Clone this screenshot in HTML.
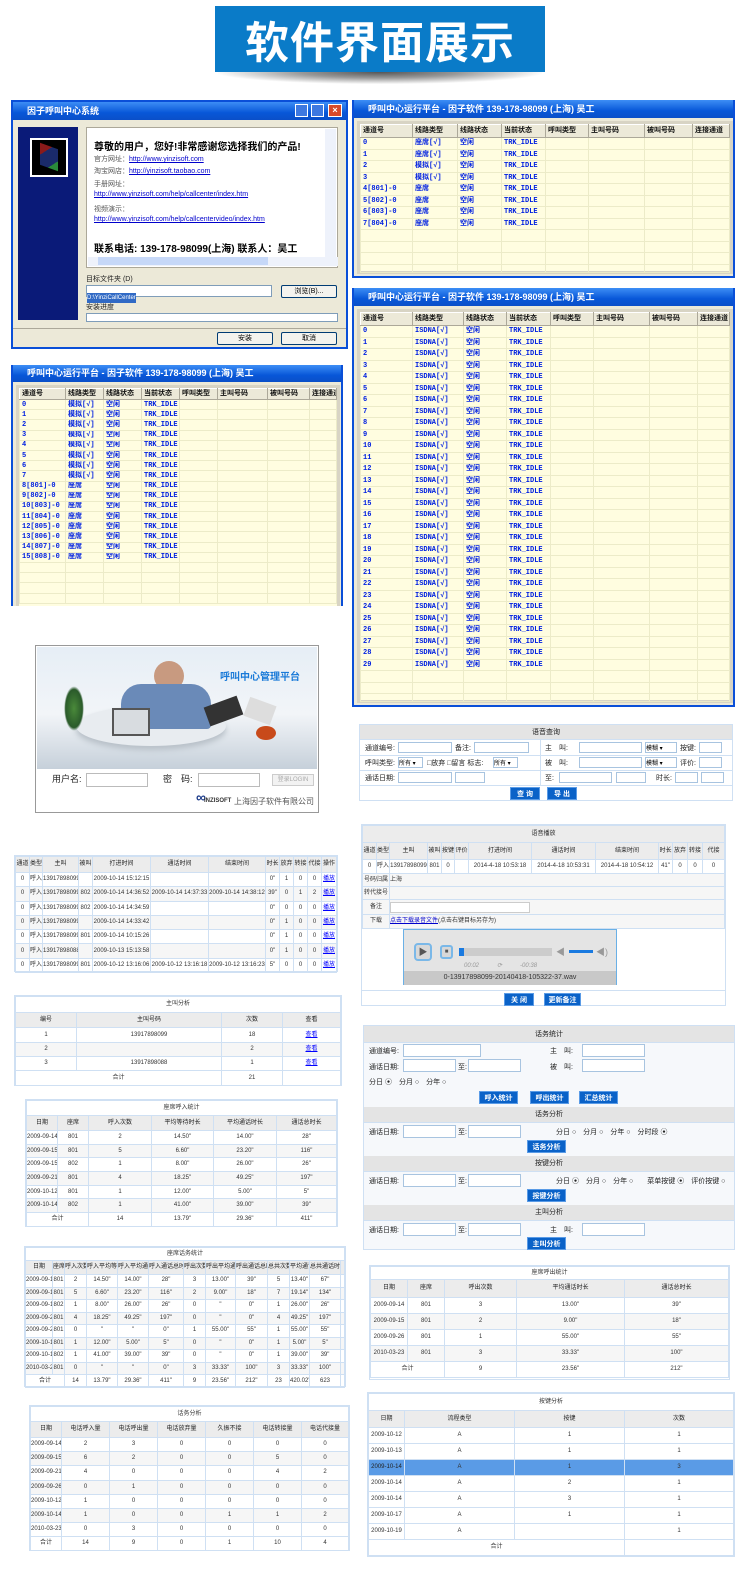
<!DOCTYPE html>
<html><head><meta charset="utf-8">
<style>
*{margin:0;padding:0;box-sizing:border-box}
body{width:750px;height:1571px;background:#fff;position:relative;overflow:hidden;font-family:"Liberation Sans","Noto Sans CJK SC",sans-serif}
.a{position:absolute}
table{border-collapse:collapse;table-layout:fixed;width:100%}
.t td{border:1px solid #cfe0f3;text-align:center;font-size:6px;line-height:7px;vertical-align:middle;color:#333;white-space:nowrap;overflow:hidden;padding:0}
.t tr.h td{background:#ececec;color:#222}
.t tr.c td{background:#fff;font-size:7px}
.box{background:#fff;border:1px solid #cfe0f3}
.win{background:#ece9d8;border:2px solid #0a4fd8}
.tb{height:18px;background:linear-gradient(#3d8ef5,#0857d8 60%,#0a4fc8);color:#fff;font-size:9px;font-weight:bold;line-height:18px;padding-left:14px;white-space:nowrap;overflow:hidden}
.g{background:#fffde0;border:3px solid #d8d4c4}
.g td{border:1px solid #ecebc8;font-size:7px;line-height:8px;vertical-align:middle;font-weight:bold;color:#0020e0;padding-left:2px;white-space:nowrap;overflow:hidden;font-family:"Liberation Mono","Noto Sans CJK SC",monospace}
.g tr.h td{background:#ece9d8;color:#111;border-color:#fff #aca899 #aca899 #fff}
.btn{position:absolute;background:#0a62c8;color:#fff;font-size:7px;font-weight:bold;text-align:center;line-height:13px;height:13px;border:1px solid #5a9be6}
.in{position:absolute;background:#fff;border:1px solid #a8c4e0;height:11px}
.lb{position:absolute;font-size:7px;color:#222;white-space:nowrap}
.sec{position:absolute;left:0;right:0;background:#e4e4e4;text-align:center;font-size:7px;color:#222;border-bottom:1px solid #cfe0f3}
</style></head><body>

<!-- Banner -->
<div class="a" style="left:218px;top:72px;width:324px;height:12px;background:radial-gradient(ellipse at 50% 0%,#555 0%,#999 35%,rgba(255,255,255,0) 72%)"></div>
<div class="a" style="left:215px;top:6px;width:330px;height:66px;background:#0a7bc8;color:#fff;font-size:44px;font-weight:bold;text-align:center;line-height:66px;font-family:'Noto Sans CJK SC',sans-serif;letter-spacing:1px">软件界面展示</div>

<!-- Installer -->
<div class="a win" style="left:11px;top:100px;width:337px;height:249px">
 <div class="tb">因子呼叫中心系统
  <span class="a" style="right:38px;top:2px;width:13px;height:13px;background:#3d78e0;border:1px solid #fff"></span>
  <span class="a" style="right:22px;top:2px;width:13px;height:13px;background:#3d78e0;border:1px solid #fff"></span>
  <span class="a" style="right:4px;top:2px;width:14px;height:13px;background:#d84a2a;border:1px solid #fff;font-size:9px;line-height:11px;text-align:center">×</span>
 </div>
 <div class="a" style="left:5px;top:25px;width:60px;height:193px;background:#0a1a78"></div>
 <div class="a" style="left:17px;top:36px;width:38px;height:39px;background:#000;border:2px solid #fff"><div style="margin:6px 8px;width:18px;height:22px;background:linear-gradient(135deg,#8a1a1a 30%,#1a2a6a 30%,#1a2a6a 75%,#2a8a3a 75%);transform:skewY(20deg)"></div></div>
 <div class="a" style="left:73px;top:25px;width:252px;height:141px;background:#fff;border:1px solid #aca899"></div>
 <div class="a" style="left:81px;top:36px;font-size:10px;font-weight:bold;white-space:nowrap">尊敬的用户，您好!非常感谢您选择我们的产品!</div>
 <div class="a lb" style="left:81px;top:52px;color:#555">官方网址：<u style="color:#00c">http://www.yinzisoft.com</u></div>
 <div class="a lb" style="left:81px;top:64px;color:#555">淘宝网店：<u style="color:#00c">http://yinzisoft.taobao.com</u></div>
 <div class="a lb" style="left:81px;top:77px;color:#555">手册网址：</div>
 <div class="a lb" style="left:81px;top:89px"><u style="color:#00c">http://www.yinzisoft.com/help/callcenter/index.htm</u></div>
 <div class="a lb" style="left:81px;top:102px;color:#555">视频演示：</div>
 <div class="a lb" style="left:81px;top:114px"><u style="color:#00c">http://www.yinzisoft.com/help/callcentervideo/index.htm</u></div>
 <div class="a" style="left:81px;top:138px;font-size:10px;font-weight:bold;white-space:nowrap">联系电话: 139-178-98099(上海) 联系人：吴工</div>
 <div class="a" style="left:312px;top:27px;width:11px;height:130px;background:#eef2fb"></div>
 <div class="a" style="left:75px;top:155px;width:250px;height:9px;background:#eef2fb"><div style="margin-left:10px;width:170px;height:8px;background:#c6d8f8"></div></div>
 <div class="lb" style="left:73px;top:172px">目标文件夹 (D)</div>
 <div class="a" style="left:73px;top:183px;width:186px;height:12px;background:#fff;border:1px solid #7f9db9"><span style="background:#316ac5;color:#fff;font-size:6px;display:inline-block;line-height:10px">D:\YinziCallCenter</span></div>
 <div class="a" style="left:268px;top:183px;width:56px;height:13px;background:#f4f3ee;border:1px solid #003c74;border-radius:2px;font-size:7px;text-align:center;line-height:11px">浏览(B)...</div>
 <div class="lb" style="left:73px;top:200px">安装进度</div>
 <div class="a" style="left:73px;top:211px;width:252px;height:9px;background:#fff;border:1px solid #7f9db9"></div>
 <div class="a" style="left:0;top:226px;width:333px;height:1px;background:#aca899"></div>
 <div class="a" style="left:204px;top:230px;width:56px;height:13px;background:#f4f3ee;border:1px solid #003c74;border-radius:2px;font-size:7px;text-align:center;line-height:11px">安装</div>
 <div class="a" style="left:268px;top:230px;width:56px;height:13px;background:#f4f3ee;border:1px solid #003c74;border-radius:2px;font-size:7px;text-align:center;line-height:11px">取消</div>
</div>

<!-- Win2 -->
<div class="a win" style="left:352px;top:100px;width:383px;height:178px;border-width:0 2px 2px 2px">
 <div class="tb">呼叫中心运行平台 - 因子软件 139-178-98099 (上海) 吴工</div>
 <div class="a g" style="left:3px;top:21px;width:376px;height:153px">
 <table><colgroup><col style="width:52px"><col style="width:45px"><col style="width:44px"><col style="width:44px"><col style="width:43px"><col style="width:56px"><col style="width:48px"><col></colgroup>
 <tr class="h" style="height:13px"><td>通道号</td><td>线路类型</td><td>线路状态</td><td>当前状态</td><td>呼叫类型</td><td>主叫号码</td><td>被叫号码</td><td>连接通道</td></tr>
 <tr style="height:11.5px"><td>0</td><td>座席[√]</td><td>空闲</td><td>TRK_IDLE</td><td></td><td></td><td></td><td></td></tr>
 <tr style="height:11.5px"><td>1</td><td>座席[√]</td><td>空闲</td><td>TRK_IDLE</td><td></td><td></td><td></td><td></td></tr>
 <tr style="height:11.5px"><td>2</td><td>模拟[√]</td><td>空闲</td><td>TRK_IDLE</td><td></td><td></td><td></td><td></td></tr>
 <tr style="height:11.5px"><td>3</td><td>模拟[√]</td><td>空闲</td><td>TRK_IDLE</td><td></td><td></td><td></td><td></td></tr>
 <tr style="height:11.5px"><td>4[801]-0</td><td>座席</td><td>空闲</td><td>TRK_IDLE</td><td></td><td></td><td></td><td></td></tr>
 <tr style="height:11.5px"><td>5[802]-0</td><td>座席</td><td>空闲</td><td>TRK_IDLE</td><td></td><td></td><td></td><td></td></tr>
 <tr style="height:11.5px"><td>6[803]-0</td><td>座席</td><td>空闲</td><td>TRK_IDLE</td><td></td><td></td><td></td><td></td></tr>
 <tr style="height:11.5px"><td>7[804]-0</td><td>座席</td><td>空闲</td><td>TRK_IDLE</td><td></td><td></td><td></td><td></td></tr>
 <tr style="height:11.5px"><td></td><td></td><td></td><td></td><td></td><td></td><td></td><td></td></tr>
 <tr style="height:11.5px"><td></td><td></td><td></td><td></td><td></td><td></td><td></td><td></td></tr>
 <tr style="height:11.5px"><td></td><td></td><td></td><td></td><td></td><td></td><td></td><td></td></tr>
 <tr style="height:8px"><td></td><td></td><td></td><td></td><td></td><td></td><td></td><td></td></tr>
 </table></div>
</div>

<!-- Win3 -->
<div class="a win" style="left:352px;top:288px;width:383px;height:419px;border-width:0 2px 2px 2px">
 <div class="tb">呼叫中心运行平台 - 因子软件 139-178-98099 (上海) 吴工</div>
 <div class="a g" style="left:3px;top:21px;width:376px;height:394px">
 <table><colgroup><col style="width:52px"><col style="width:51px"><col style="width:43px"><col style="width:44px"><col style="width:43px"><col style="width:56px"><col style="width:48px"><col></colgroup>
 <tr class="h" style="height:13px"><td>通道号</td><td>线路类型</td><td>线路状态</td><td>当前状态</td><td>呼叫类型</td><td>主叫号码</td><td>被叫号码</td><td>连接通道</td></tr>
 <tr style="height:11.5px"><td>0</td><td>ISDNA[√]</td><td>空闲</td><td>TRK_IDLE</td><td></td><td></td><td></td><td></td></tr>
 <tr style="height:11.5px"><td>1</td><td>ISDNA[√]</td><td>空闲</td><td>TRK_IDLE</td><td></td><td></td><td></td><td></td></tr>
 <tr style="height:11.5px"><td>2</td><td>ISDNA[√]</td><td>空闲</td><td>TRK_IDLE</td><td></td><td></td><td></td><td></td></tr>
 <tr style="height:11.5px"><td>3</td><td>ISDNA[√]</td><td>空闲</td><td>TRK_IDLE</td><td></td><td></td><td></td><td></td></tr>
 <tr style="height:11.5px"><td>4</td><td>ISDNA[√]</td><td>空闲</td><td>TRK_IDLE</td><td></td><td></td><td></td><td></td></tr>
 <tr style="height:11.5px"><td>5</td><td>ISDNA[√]</td><td>空闲</td><td>TRK_IDLE</td><td></td><td></td><td></td><td></td></tr>
 <tr style="height:11.5px"><td>6</td><td>ISDNA[√]</td><td>空闲</td><td>TRK_IDLE</td><td></td><td></td><td></td><td></td></tr>
 <tr style="height:11.5px"><td>7</td><td>ISDNA[√]</td><td>空闲</td><td>TRK_IDLE</td><td></td><td></td><td></td><td></td></tr>
 <tr style="height:11.5px"><td>8</td><td>ISDNA[√]</td><td>空闲</td><td>TRK_IDLE</td><td></td><td></td><td></td><td></td></tr>
 <tr style="height:11.5px"><td>9</td><td>ISDNA[√]</td><td>空闲</td><td>TRK_IDLE</td><td></td><td></td><td></td><td></td></tr>
 <tr style="height:11.5px"><td>10</td><td>ISDNA[√]</td><td>空闲</td><td>TRK_IDLE</td><td></td><td></td><td></td><td></td></tr>
 <tr style="height:11.5px"><td>11</td><td>ISDNA[√]</td><td>空闲</td><td>TRK_IDLE</td><td></td><td></td><td></td><td></td></tr>
 <tr style="height:11.5px"><td>12</td><td>ISDNA[√]</td><td>空闲</td><td>TRK_IDLE</td><td></td><td></td><td></td><td></td></tr>
 <tr style="height:11.5px"><td>13</td><td>ISDNA[√]</td><td>空闲</td><td>TRK_IDLE</td><td></td><td></td><td></td><td></td></tr>
 <tr style="height:11.5px"><td>14</td><td>ISDNA[√]</td><td>空闲</td><td>TRK_IDLE</td><td></td><td></td><td></td><td></td></tr>
 <tr style="height:11.5px"><td>15</td><td>ISDNA[√]</td><td>空闲</td><td>TRK_IDLE</td><td></td><td></td><td></td><td></td></tr>
 <tr style="height:11.5px"><td>16</td><td>ISDNA[√]</td><td>空闲</td><td>TRK_IDLE</td><td></td><td></td><td></td><td></td></tr>
 <tr style="height:11.5px"><td>17</td><td>ISDNA[√]</td><td>空闲</td><td>TRK_IDLE</td><td></td><td></td><td></td><td></td></tr>
 <tr style="height:11.5px"><td>18</td><td>ISDNA[√]</td><td>空闲</td><td>TRK_IDLE</td><td></td><td></td><td></td><td></td></tr>
 <tr style="height:11.5px"><td>19</td><td>ISDNA[√]</td><td>空闲</td><td>TRK_IDLE</td><td></td><td></td><td></td><td></td></tr>
 <tr style="height:11.5px"><td>20</td><td>ISDNA[√]</td><td>空闲</td><td>TRK_IDLE</td><td></td><td></td><td></td><td></td></tr>
 <tr style="height:11.5px"><td>21</td><td>ISDNA[√]</td><td>空闲</td><td>TRK_IDLE</td><td></td><td></td><td></td><td></td></tr>
 <tr style="height:11.5px"><td>22</td><td>ISDNA[√]</td><td>空闲</td><td>TRK_IDLE</td><td></td><td></td><td></td><td></td></tr>
 <tr style="height:11.5px"><td>23</td><td>ISDNA[√]</td><td>空闲</td><td>TRK_IDLE</td><td></td><td></td><td></td><td></td></tr>
 <tr style="height:11.5px"><td>24</td><td>ISDNA[√]</td><td>空闲</td><td>TRK_IDLE</td><td></td><td></td><td></td><td></td></tr>
 <tr style="height:11.5px"><td>25</td><td>ISDNA[√]</td><td>空闲</td><td>TRK_IDLE</td><td></td><td></td><td></td><td></td></tr>
 <tr style="height:11.5px"><td>26</td><td>ISDNA[√]</td><td>空闲</td><td>TRK_IDLE</td><td></td><td></td><td></td><td></td></tr>
 <tr style="height:11.5px"><td>27</td><td>ISDNA[√]</td><td>空闲</td><td>TRK_IDLE</td><td></td><td></td><td></td><td></td></tr>
 <tr style="height:11.5px"><td>28</td><td>ISDNA[√]</td><td>空闲</td><td>TRK_IDLE</td><td></td><td></td><td></td><td></td></tr>
 <tr style="height:11.5px"><td>29</td><td>ISDNA[√]</td><td>空闲</td><td>TRK_IDLE</td><td></td><td></td><td></td><td></td></tr>
 <tr style="height:11.5px"><td></td><td></td><td></td><td></td><td></td><td></td><td></td><td></td></tr>
 <tr style="height:11.5px"><td></td><td></td><td></td><td></td><td></td><td></td><td></td><td></td></tr>
 <tr style="height:8px"><td></td><td></td><td></td><td></td><td></td><td></td><td></td><td></td></tr>
 </table></div>
</div>

<!-- Win4 -->
<div class="a win" style="left:11px;top:365px;width:332px;height:241px;border-width:0 2px 0 2px">
 <div class="tb" style="height:17px;line-height:17px">呼叫中心运行平台 - 因子软件 139-178-98099 (上海) 吴工</div>
 <div class="a g" style="left:3px;top:20px;width:324px;height:221px;border-bottom:0">
 <table><colgroup><col style="width:46px"><col style="width:38px"><col style="width:38px"><col style="width:38px"><col style="width:38px"><col style="width:50px"><col style="width:42px"><col></colgroup>
 <tr class="h" style="height:11px"><td>通道号</td><td>线路类型</td><td>线路状态</td><td>当前状态</td><td>呼叫类型</td><td>主叫号码</td><td>被叫号码</td><td>连接通道</td></tr>
 <tr style="height:10.2px"><td>0</td><td>模拟[√]</td><td>空闲</td><td>TRK_IDLE</td><td></td><td></td><td></td><td></td></tr>
 <tr style="height:10.2px"><td>1</td><td>模拟[√]</td><td>空闲</td><td>TRK_IDLE</td><td></td><td></td><td></td><td></td></tr>
 <tr style="height:10.2px"><td>2</td><td>模拟[√]</td><td>空闲</td><td>TRK_IDLE</td><td></td><td></td><td></td><td></td></tr>
 <tr style="height:10.2px"><td>3</td><td>模拟[√]</td><td>空闲</td><td>TRK_IDLE</td><td></td><td></td><td></td><td></td></tr>
 <tr style="height:10.2px"><td>4</td><td>模拟[√]</td><td>空闲</td><td>TRK_IDLE</td><td></td><td></td><td></td><td></td></tr>
 <tr style="height:10.2px"><td>5</td><td>模拟[√]</td><td>空闲</td><td>TRK_IDLE</td><td></td><td></td><td></td><td></td></tr>
 <tr style="height:10.2px"><td>6</td><td>模拟[√]</td><td>空闲</td><td>TRK_IDLE</td><td></td><td></td><td></td><td></td></tr>
 <tr style="height:10.2px"><td>7</td><td>模拟[√]</td><td>空闲</td><td>TRK_IDLE</td><td></td><td></td><td></td><td></td></tr>
 <tr style="height:10.2px"><td>8[801]-0</td><td>座席</td><td>空闲</td><td>TRK_IDLE</td><td></td><td></td><td></td><td></td></tr>
 <tr style="height:10.2px"><td>9[802]-0</td><td>座席</td><td>空闲</td><td>TRK_IDLE</td><td></td><td></td><td></td><td></td></tr>
 <tr style="height:10.2px"><td>10[803]-0</td><td>座席</td><td>空闲</td><td>TRK_IDLE</td><td></td><td></td><td></td><td></td></tr>
 <tr style="height:10.2px"><td>11[804]-0</td><td>座席</td><td>空闲</td><td>TRK_IDLE</td><td></td><td></td><td></td><td></td></tr>
 <tr style="height:10.2px"><td>12[805]-0</td><td>座席</td><td>空闲</td><td>TRK_IDLE</td><td></td><td></td><td></td><td></td></tr>
 <tr style="height:10.2px"><td>13[806]-0</td><td>座席</td><td>空闲</td><td>TRK_IDLE</td><td></td><td></td><td></td><td></td></tr>
 <tr style="height:10.2px"><td>14[807]-0</td><td>座席</td><td>空闲</td><td>TRK_IDLE</td><td></td><td></td><td></td><td></td></tr>
 <tr style="height:10.2px"><td>15[808]-0</td><td>座席</td><td>空闲</td><td>TRK_IDLE</td><td></td><td></td><td></td><td></td></tr>
 <tr style="height:10.2px"><td></td><td></td><td></td><td></td><td></td><td></td><td></td><td></td></tr>
 <tr style="height:10.2px"><td></td><td></td><td></td><td></td><td></td><td></td><td></td><td></td></tr>
 <tr style="height:10.2px"><td></td><td></td><td></td><td></td><td></td><td></td><td></td><td></td></tr>
 <tr style="height:10px"><td></td><td></td><td></td><td></td><td></td><td></td><td></td><td></td></tr>
 </table></div>
</div>

<!-- Login -->
<div class="a" style="left:35px;top:645px;width:284px;height:168px;border:1px solid #999;background:#fff">
 <div class="a" style="left:1px;top:1px;width:280px;height:122px;background:linear-gradient(180deg,#e6eef6 0%,#f2f5f8 55%,#c6d0da 100%)"></div>
 <div class="a" style="left:40px;top:60px;width:150px;height:40px;border-radius:50%;background:#e8ecf0;box-shadow:0 4px 6px #b8c0c8"></div>
 <div class="a" style="left:118px;top:15px;width:30px;height:30px;border-radius:50%;background:#c89a80"></div>
 <div class="a" style="left:85px;top:38px;width:90px;height:45px;border-radius:20px 20px 4px 4px;background:#6a8ab8"></div>
 <div class="a" style="left:76px;top:62px;width:38px;height:28px;background:#d8dce0;border:2px solid #555"></div>
 <div class="a" style="left:170px;top:55px;width:35px;height:20px;background:#333;transform:rotate(-20deg)"></div>
 <div class="a" style="left:210px;top:55px;width:28px;height:20px;background:#ddd;transform:rotate(20deg)"></div>
 <div class="a" style="left:220px;top:80px;width:20px;height:14px;border-radius:50%;background:#c84a1a"></div>
 <div class="a" style="left:28px;top:40px;width:20px;height:45px;background:radial-gradient(#4a8a3a,#2a5a2a 60%,rgba(0,0,0,0) 70%)"></div>
 <div class="a" style="left:184px;top:22px;font-size:10px;font-weight:bold;color:#1a7ad8;white-space:nowrap">呼叫中心管理平台</div>
 <div class="lb" style="left:16px;top:126px;font-size:9px">用户名:</div>
 <div class="a" style="left:50px;top:127px;width:62px;height:14px;border:1px solid #bbb"></div>
 <div class="lb" style="left:127px;top:126px;font-size:9px">密　码:</div>
 <div class="a" style="left:162px;top:127px;width:62px;height:14px;border:1px solid #bbb"></div>
 <div class="a" style="left:236px;top:128px;width:42px;height:12px;border:1px solid #ccc;background:#f2f2f2;font-size:6px;color:#aaa;text-align:center;line-height:10px">登录LOGIN</div>
 <div class="a" style="left:160px;top:143px;font-size:14px;color:#1a3a8a;font-weight:bold">∞</div>
 <div class="lb" style="left:168px;top:152px;font-size:6px;font-weight:bold;color:#333">INZISOFT</div>
 <div class="lb" style="left:198px;top:150px;font-size:8px;color:#555">上海因子软件有限公司</div>
</div>

<!-- Voice query -->
<div class="a box" style="left:359px;top:724px;width:374px;height:77px">
 <div class="sec" style="top:0;height:15px;line-height:15px">语音查询</div>
 <div class="a" style="left:0;right:0;top:30px;height:1px;background:#cfe0f3"></div>
 <div class="a" style="left:0;right:0;top:45px;height:1px;background:#cfe0f3"></div>
 <div class="a" style="left:0;right:0;top:60px;height:1px;background:#cfe0f3"></div>
 <div class="a" style="left:180px;top:15px;width:1px;height:45px;background:#cfe0f3"></div>
 <div class="lb" style="left:5px;top:18px">通道编号:</div><div class="in" style="left:38px;top:17px;width:54px"></div>
 <div class="lb" style="left:95px;top:18px">备注:</div><div class="in" style="left:114px;top:17px;width:55px"></div>
 <div class="lb" style="left:185px;top:18px">主　叫:</div><div class="in" style="left:219px;top:17px;width:63px"></div>
 <div class="in" style="left:285px;top:17px;width:32px;font-size:6px">模糊 ▾</div><div class="lb" style="left:320px;top:18px">按键:</div><div class="in" style="left:339px;top:17px;width:23px"></div>
 <div class="lb" style="left:5px;top:33px">呼叫类型:</div><div class="in" style="left:38px;top:32px;width:25px;font-size:6px">所有 ▾</div>
 <div class="lb" style="left:67px;top:33px">□放弃 □留言 标志:</div><div class="in" style="left:133px;top:32px;width:25px;font-size:6px">所有 ▾</div>
 <div class="lb" style="left:185px;top:33px">被　叫:</div><div class="in" style="left:219px;top:32px;width:63px"></div>
 <div class="in" style="left:285px;top:32px;width:32px;font-size:6px">模糊 ▾</div><div class="lb" style="left:320px;top:33px">评价:</div><div class="in" style="left:339px;top:32px;width:23px"></div>
 <div class="lb" style="left:5px;top:48px">通话日期:</div><div class="in" style="left:38px;top:47px;width:54px"></div><div class="in" style="left:95px;top:47px;width:30px"></div>
 <div class="lb" style="left:185px;top:48px">至:</div><div class="in" style="left:199px;top:47px;width:53px"></div><div class="in" style="left:256px;top:47px;width:30px"></div>
 <div class="lb" style="left:296px;top:48px">时长:</div><div class="in" style="left:315px;top:47px;width:23px"></div><div class="in" style="left:341px;top:47px;width:23px"></div>
 <div class="btn" style="left:150px;top:62px;width:30px">查 询</div><div class="btn" style="left:187px;top:62px;width:30px">导 出</div>
</div>

<!-- Playback -->
<div class="a box" style="left:361px;top:824px;width:365px;height:182px">
 <table class="t">
 <colgroup><col style="width:14px"><col style="width:13px"><col style="width:38px"><col style="width:14px"><col style="width:13px"><col style="width:14px"><col style="width:63px"><col style="width:64px"><col style="width:63px"><col style="width:14px"><col style="width:15px"><col style="width:15px"><col></colgroup>
 <tr class="h"><td colspan="13" style="height:17px">语音播放</td></tr>
 <tr class="h" style="height:17px"><td>通道</td><td>类型</td><td>主叫</td><td>被叫</td><td>按键</td><td>评价</td><td>打进时间</td><td>通话时间</td><td>结束时间</td><td>时长</td><td>放弃</td><td>转接</td><td>代接</td></tr>
 <tr style="height:14px"><td>0</td><td>呼入</td><td>13917898099</td><td>801</td><td>0</td><td></td><td>2014-4-18 10:53:18</td><td>2014-4-18 10:53:31</td><td>2014-4-18 10:54:12</td><td>41"</td><td>0</td><td>0</td><td>0</td></tr>
 <tr style="height:13px;background:#f6f6f6"><td colspan="2">号码归属</td><td colspan="11" style="text-align:left">上海</td></tr>
 <tr style="height:13px;background:#f6f6f6"><td colspan="2">转代接号</td><td colspan="11"></td></tr>
 <tr style="height:15px;background:#f6f6f6"><td colspan="2">备注</td><td colspan="11" style="text-align:left"><span style="display:inline-block;width:140px;height:11px;border:1px solid #ccc;background:#fff;vertical-align:middle"></span></td></tr>
 <tr style="height:14px;background:#f6f6f6"><td colspan="2">下载</td><td colspan="11" style="text-align:left"><u style="color:#00c">点击下载录音文件</u>(点击右键目标另存为)</td></tr>
 </table>
 <div class="a" style="left:41px;top:104px;width:214px;height:56px;border:1px solid #6ab0e6;background:#e4e4e4">
  <div class="a" style="left:10px;top:13px;width:18px;height:18px;border-radius:4px;border:2px solid #7ab8e8;background:#d8d8d8;font-size:9px;color:#555;text-align:center;line-height:14px">▶</div>
  <div class="a" style="left:36px;top:15px;width:13px;height:14px;border-radius:3px;border:2px solid #7ab8e8;background:#d8d8d8;font-size:6px;color:#555;text-align:center;line-height:10px">■</div>
  <div class="a" style="left:55px;top:18px;width:93px;height:8px;background:#ccc"><div style="width:5px;height:8px;background:#1a7ae0"></div></div>
  <div class="a" style="left:152px;top:15px;font-size:9px;color:#999">◀</div>
  <div class="a" style="left:165px;top:20px;width:24px;height:3px;background:#1a7ae0"></div>
  <div class="a" style="left:192px;top:15px;font-size:9px;color:#999">◀)</div>
  <div class="lb" style="left:60px;top:30px;color:#999;font-style:italic;font-size:6px">00:02　　　⟳　　　-00:38</div>
  <div class="a" style="left:0;right:0;top:41px;height:14px;background:#c8c8c8;font-size:7px;color:#333;text-align:center;line-height:14px">0-13917898099-20140418-105322-37.wav</div>
 </div>
 <div class="a" style="left:0;right:0;top:165px;height:1px;background:#cfe0f3"></div>
 <div class="btn" style="left:142px;top:168px;width:30px">关 闭</div><div class="btn" style="left:182px;top:168px;width:37px">更新备注</div>
</div>

<!-- Records -->
<div class="a box" style="left:14px;top:855px;width:324px;height:117px">
 <table class="t"><colgroup><col style="width:14px"><col style="width:13px"><col style="width:36px"><col style="width:14px"><col style="width:58px"><col style="width:58px"><col style="width:57px"><col style="width:14px"><col style="width:14px"><col style="width:14px"><col style="width:14px"><col></colgroup>
 <tr class="h" style="height:16px"><td>通道</td><td>类型</td><td>主叫</td><td>被叫</td><td>打进时间</td><td>通话时间</td><td>结束时间</td><td>时长</td><td>放弃</td><td>转接</td><td>代接</td><td>操作</td></tr>
 <tr style="height:14.3px"><td>0</td><td>呼入</td><td>13917898099</td><td></td><td>2009-10-14 15:12:15</td><td></td><td></td><td>0"</td><td>1</td><td>0</td><td>0</td><td><u style="color:#00f">播放</u></td></tr>
 <tr style="height:14.3px;background:#f6f6f6"><td>0</td><td>呼入</td><td>13917898099</td><td>802</td><td>2009-10-14 14:36:52</td><td>2009-10-14 14:37:33</td><td>2009-10-14 14:38:12</td><td>39"</td><td>0</td><td>1</td><td>2</td><td><u style="color:#00f">播放</u></td></tr>
 <tr style="height:14.3px"><td>0</td><td>呼入</td><td>13917898099</td><td>802</td><td>2009-10-14 14:34:59</td><td></td><td></td><td>0"</td><td>0</td><td>0</td><td>0</td><td><u style="color:#00f">播放</u></td></tr>
 <tr style="height:14.3px;background:#f6f6f6"><td>0</td><td>呼入</td><td>13917898099</td><td></td><td>2009-10-14 14:33:42</td><td></td><td></td><td>0"</td><td>1</td><td>0</td><td>0</td><td><u style="color:#00f">播放</u></td></tr>
 <tr style="height:14.3px"><td>0</td><td>呼入</td><td>13917898099</td><td>801</td><td>2009-10-14 10:15:26</td><td></td><td></td><td>0"</td><td>1</td><td>0</td><td>0</td><td><u style="color:#00f">播放</u></td></tr>
 <tr style="height:14.3px;background:#f6f6f6"><td>0</td><td>呼入</td><td>13917898088</td><td></td><td>2009-10-13 15:13:58</td><td></td><td></td><td>0"</td><td>1</td><td>0</td><td>0</td><td><u style="color:#00f">播放</u></td></tr>
 <tr style="height:14.3px"><td>0</td><td>呼入</td><td>13917898099</td><td>801</td><td>2009-10-12 13:16:06</td><td>2009-10-12 13:16:18</td><td>2009-10-12 13:16:23</td><td>5"</td><td>0</td><td>0</td><td>0</td><td><u style="color:#00f">播放</u></td></tr>
 </table>
</div>

<!-- Caller analysis -->
<div class="a box" style="left:14px;top:995px;width:328px;height:91px">
 <table class="t"><colgroup><col style="width:61px"><col style="width:145px"><col style="width:61px"><col></colgroup>
 <tr class="c"><td colspan="4" style="height:16px;font-size:6px">主叫分析</td></tr>
 <tr class="h" style="height:15px"><td>编号</td><td>主叫号码</td><td>次数</td><td>查看</td></tr>
 <tr style="height:15px"><td>1</td><td>13917898099</td><td>18</td><td><u style="color:#00f">查看</u></td></tr>
 <tr style="height:14px;background:#f6f6f6"><td>2</td><td></td><td>2</td><td><u style="color:#00f">查看</u></td></tr>
 <tr style="height:14px"><td>3</td><td>13917898088</td><td>1</td><td><u style="color:#00f">查看</u></td></tr>
 <tr style="height:15px"><td colspan="2">合计</td><td>21</td><td></td></tr>
 </table>
</div>

<!-- Seat inbound -->
<div class="a box" style="left:25px;top:1099px;width:313px;height:128px">
 <table class="t"><colgroup><col style="width:31px"><col style="width:31px"><col style="width:63px"><col style="width:62px"><col style="width:63px"><col></colgroup>
 <tr class="c"><td colspan="6" style="height:15px;font-size:6px">座席呼入统计</td></tr>
 <tr class="h" style="height:15px"><td>日期</td><td>座席</td><td>呼入次数</td><td>平均等待时长</td><td>平均通话时长</td><td>通话总时长</td></tr>
 <tr style="height:13.7px"><td>2009-09-14</td><td>801</td><td>2</td><td>14.50"</td><td>14.00"</td><td>28"</td></tr>
 <tr style="height:13.7px;background:#f6f6f6"><td>2009-09-15</td><td>801</td><td>5</td><td>6.60"</td><td>23.20"</td><td>116"</td></tr>
 <tr style="height:13.7px"><td>2009-09-15</td><td>802</td><td>1</td><td>8.00"</td><td>26.00"</td><td>26"</td></tr>
 <tr style="height:13.7px;background:#f6f6f6"><td>2009-09-21</td><td>801</td><td>4</td><td>18.25"</td><td>49.25"</td><td>197"</td></tr>
 <tr style="height:13.7px"><td>2009-10-12</td><td>801</td><td>1</td><td>12.00"</td><td>5.00"</td><td>5"</td></tr>
 <tr style="height:13.7px;background:#f6f6f6"><td>2009-10-14</td><td>802</td><td>1</td><td>41.00"</td><td>39.00"</td><td>39"</td></tr>
 <tr style="height:14px"><td colspan="2">合计</td><td>14</td><td>13.79"</td><td>29.36"</td><td>411"</td></tr>
 </table>
</div>

<!-- Seat big -->
<div class="a box" style="left:24px;top:1246px;width:322px;height:141px">
 <table class="t"><colgroup><col style="width:27px"><col style="width:12px"><col style="width:22px"><col style="width:31px"><col style="width:31px"><col style="width:35px"><col style="width:22px"><col style="width:30px"><col style="width:32px"><col style="width:22px"><col style="width:20px"><col style="width:31px"><col></colgroup>
 <tr class="c"><td colspan="13" style="height:13px;font-size:6px">座席话务统计</td></tr>
 <tr class="h" style="height:14px"><td>日期</td><td>座席</td><td>呼入次数</td><td>呼入平均等待</td><td>呼入平均通话</td><td>呼入通话总时长</td><td>呼出次数</td><td>呼出平均通话</td><td>呼出通话总时长</td><td>总共次数</td><td>平均通话</td><td>总共通话时长</td><td></td></tr>
 <tr style="height:12.5px"><td>2009-09-14</td><td>801</td><td>2</td><td>14.50"</td><td>14.00"</td><td>28"</td><td>3</td><td>13.00"</td><td>39"</td><td>5</td><td>13.40"</td><td>67"</td><td></td></tr>
 <tr style="height:12.5px;background:#f6f6f6"><td>2009-09-15</td><td>801</td><td>5</td><td>6.60"</td><td>23.20"</td><td>116"</td><td>2</td><td>9.00"</td><td>18"</td><td>7</td><td>19.14"</td><td>134"</td><td></td></tr>
 <tr style="height:12.5px"><td>2009-09-15</td><td>802</td><td>1</td><td>8.00"</td><td>26.00"</td><td>26"</td><td>0</td><td>"</td><td>0"</td><td>1</td><td>26.00"</td><td>26"</td><td></td></tr>
 <tr style="height:12.5px;background:#f6f6f6"><td>2009-09-21</td><td>801</td><td>4</td><td>18.25"</td><td>49.25"</td><td>197"</td><td>0</td><td>"</td><td>0"</td><td>4</td><td>49.25"</td><td>197"</td><td></td></tr>
 <tr style="height:12.5px"><td>2009-09-26</td><td>801</td><td>0</td><td>"</td><td>"</td><td>0"</td><td>1</td><td>55.00"</td><td>55"</td><td>1</td><td>55.00"</td><td>55"</td><td></td></tr>
 <tr style="height:12.5px;background:#f6f6f6"><td>2009-10-12</td><td>801</td><td>1</td><td>12.00"</td><td>5.00"</td><td>5"</td><td>0</td><td>"</td><td>0"</td><td>1</td><td>5.00"</td><td>5"</td><td></td></tr>
 <tr style="height:12.5px"><td>2009-10-14</td><td>802</td><td>1</td><td>41.00"</td><td>39.00"</td><td>39"</td><td>0</td><td>"</td><td>0"</td><td>1</td><td>39.00"</td><td>39"</td><td></td></tr>
 <tr style="height:12.5px;background:#f6f6f6"><td>2010-03-23</td><td>801</td><td>0</td><td>"</td><td>"</td><td>0"</td><td>3</td><td>33.33"</td><td>100"</td><td>3</td><td>33.33"</td><td>100"</td><td></td></tr>
 <tr style="height:13px"><td colspan="2">合计</td><td>14</td><td>13.79"</td><td>29.36"</td><td>411"</td><td>9</td><td>23.56"</td><td>212"</td><td>23</td><td>420.02"</td><td>623</td><td></td></tr>
 </table>
</div>

<!-- Service analysis -->
<div class="a box" style="left:29px;top:1405px;width:321px;height:146px">
 <table class="t"><colgroup><col style="width:31px"><col style="width:48px"><col style="width:48px"><col style="width:48px"><col style="width:48px"><col style="width:48px"><col></colgroup>
 <tr class="c"><td colspan="7" style="height:15px;font-size:6px">话务分析</td></tr>
 <tr class="h" style="height:16px"><td>日期</td><td>电话呼入量</td><td>电话呼出量</td><td>电话放弃量</td><td>久振不接</td><td>电话转接量</td><td>电话代接量</td></tr>
 <tr style="height:14.2px"><td>2009-09-14</td><td>2</td><td>3</td><td>0</td><td>0</td><td>0</td><td>0</td></tr>
 <tr style="height:14.2px;background:#f6f6f6"><td>2009-09-15</td><td>6</td><td>2</td><td>0</td><td>0</td><td>5</td><td>0</td></tr>
 <tr style="height:14.2px"><td>2009-09-21</td><td>4</td><td>0</td><td>0</td><td>0</td><td>4</td><td>2</td></tr>
 <tr style="height:14.2px;background:#f6f6f6"><td>2009-09-26</td><td>0</td><td>1</td><td>0</td><td>0</td><td>0</td><td>0</td></tr>
 <tr style="height:14.2px"><td>2009-10-12</td><td>1</td><td>0</td><td>0</td><td>0</td><td>0</td><td>0</td></tr>
 <tr style="height:14.2px;background:#f6f6f6"><td>2009-10-14</td><td>1</td><td>0</td><td>0</td><td>1</td><td>1</td><td>2</td></tr>
 <tr style="height:14.2px"><td>2010-03-23</td><td>0</td><td>3</td><td>0</td><td>0</td><td>0</td><td>0</td></tr>
 <tr style="height:14px"><td>合计</td><td>14</td><td>9</td><td>0</td><td>1</td><td>10</td><td>4</td></tr>
 </table>
</div>

<!-- Stats form -->
<div class="a box" style="left:363px;top:1025px;width:372px;height:225px;background:#f6f8fb">
 <div class="sec" style="top:0;height:17px;line-height:17px">话务统计</div>
 <div class="lb" style="left:5px;top:20px">通道编号:</div><div class="in" style="left:39px;top:18px;width:78px;height:13px"></div>
 <div class="lb" style="left:186px;top:20px">主　叫:</div><div class="in" style="left:218px;top:18px;width:63px;height:13px"></div>
 <div class="lb" style="left:5px;top:36px">通话日期:</div><div class="in" style="left:39px;top:33px;width:53px;height:13px"></div>
 <div class="lb" style="left:94px;top:36px">至:</div><div class="in" style="left:104px;top:33px;width:53px;height:13px"></div>
 <div class="lb" style="left:186px;top:36px">被　叫:</div><div class="in" style="left:218px;top:33px;width:63px;height:13px"></div>
 <div class="lb" style="left:5px;top:51px">分日 ⦿　分月 ○　分年 ○</div>
 <div class="btn" style="left:115px;top:65px;width:39px">呼入统计</div><div class="btn" style="left:166px;top:65px;width:39px">呼出统计</div><div class="btn" style="left:215px;top:65px;width:39px">汇总统计</div>
 <div class="sec" style="top:81px;height:16px;line-height:16px">话务分析</div>
 <div class="lb" style="left:5px;top:101px">通话日期:</div><div class="in" style="left:39px;top:99px;width:53px;height:13px"></div>
 <div class="lb" style="left:94px;top:101px">至:</div><div class="in" style="left:104px;top:99px;width:53px;height:13px"></div>
 <div class="lb" style="left:192px;top:101px">分日 ○　分月 ○　分年 ○　分时段 ⦿</div>
 <div class="btn" style="left:163px;top:114px;width:39px">话务分析</div>
 <div class="sec" style="top:130px;height:16px;line-height:16px">按键分析</div>
 <div class="lb" style="left:5px;top:150px">通话日期:</div><div class="in" style="left:39px;top:148px;width:53px;height:13px"></div>
 <div class="lb" style="left:94px;top:150px">至:</div><div class="in" style="left:104px;top:148px;width:53px;height:13px"></div>
 <div class="lb" style="left:192px;top:150px">分日 ⦿　分月 ○　分年 ○　　菜单按键 ⦿　评价按键 ○</div>
 <div class="btn" style="left:163px;top:163px;width:39px">按键分析</div>
 <div class="sec" style="top:179px;height:16px;line-height:16px">主叫分析</div>
 <div class="lb" style="left:5px;top:199px">通话日期:</div><div class="in" style="left:39px;top:197px;width:53px;height:13px"></div>
 <div class="lb" style="left:94px;top:199px">至:</div><div class="in" style="left:104px;top:197px;width:53px;height:13px"></div>
 <div class="lb" style="left:186px;top:199px">主　叫:</div><div class="in" style="left:218px;top:197px;width:63px;height:13px"></div>
 <div class="btn" style="left:163px;top:211px;width:39px">主叫分析</div>
</div>

<!-- Seat outbound -->
<div class="a box" style="left:369px;top:1265px;width:361px;height:115px">
 <table class="t"><colgroup><col style="width:37px"><col style="width:37px"><col style="width:72px"><col style="width:108px"><col></colgroup>
 <tr class="c"><td colspan="5" style="height:13px;font-size:6px">座席呼出统计</td></tr>
 <tr class="h" style="height:18px"><td>日期</td><td>座席</td><td>呼出次数</td><td>平均通话时长</td><td>通话总时长</td></tr>
 <tr style="height:16px"><td>2009-09-14</td><td>801</td><td>3</td><td>13.00"</td><td>39"</td></tr>
 <tr style="height:16px;background:#f6f6f6"><td>2009-09-15</td><td>801</td><td>2</td><td>9.00"</td><td>18"</td></tr>
 <tr style="height:16px"><td>2009-09-26</td><td>801</td><td>1</td><td>55.00"</td><td>55"</td></tr>
 <tr style="height:16px;background:#f6f6f6"><td>2010-03-23</td><td>801</td><td>3</td><td>33.33"</td><td>100"</td></tr>
 <tr style="height:16px"><td colspan="2">合计</td><td>9</td><td>23.56"</td><td>212"</td></tr>
 </table>
</div>

<!-- Key analysis -->
<div class="a box" style="left:367px;top:1392px;width:368px;height:165px">
 <table class="t"><colgroup><col style="width:36px"><col style="width:110px"><col style="width:110px"><col></colgroup>
 <tr class="c"><td colspan="4" style="height:17px;font-size:6px">按键分析</td></tr>
 <tr class="h" style="height:17px"><td>日期</td><td>流程类型</td><td>按键</td><td>次数</td></tr>
 <tr style="height:16px"><td>2009-10-12</td><td>A</td><td>1</td><td>1</td></tr>
 <tr style="height:16px"><td>2009-10-13</td><td>A</td><td>1</td><td>1</td></tr>
 <tr style="height:16px;background:#5a9be6"><td style="color:#222">2009-10-14</td><td>A</td><td>1</td><td>3</td></tr>
 <tr style="height:16px"><td>2009-10-14</td><td>A</td><td>2</td><td>1</td></tr>
 <tr style="height:16px"><td>2009-10-14</td><td>A</td><td>3</td><td>1</td></tr>
 <tr style="height:16px"><td>2009-10-17</td><td>A</td><td>1</td><td>1</td></tr>
 <tr style="height:16px"><td>2009-10-19</td><td>A</td><td></td><td>1</td></tr>
 <tr style="height:16px"><td colspan="3">合计</td><td></td></tr>
 </table>
</div>

</body></html>
